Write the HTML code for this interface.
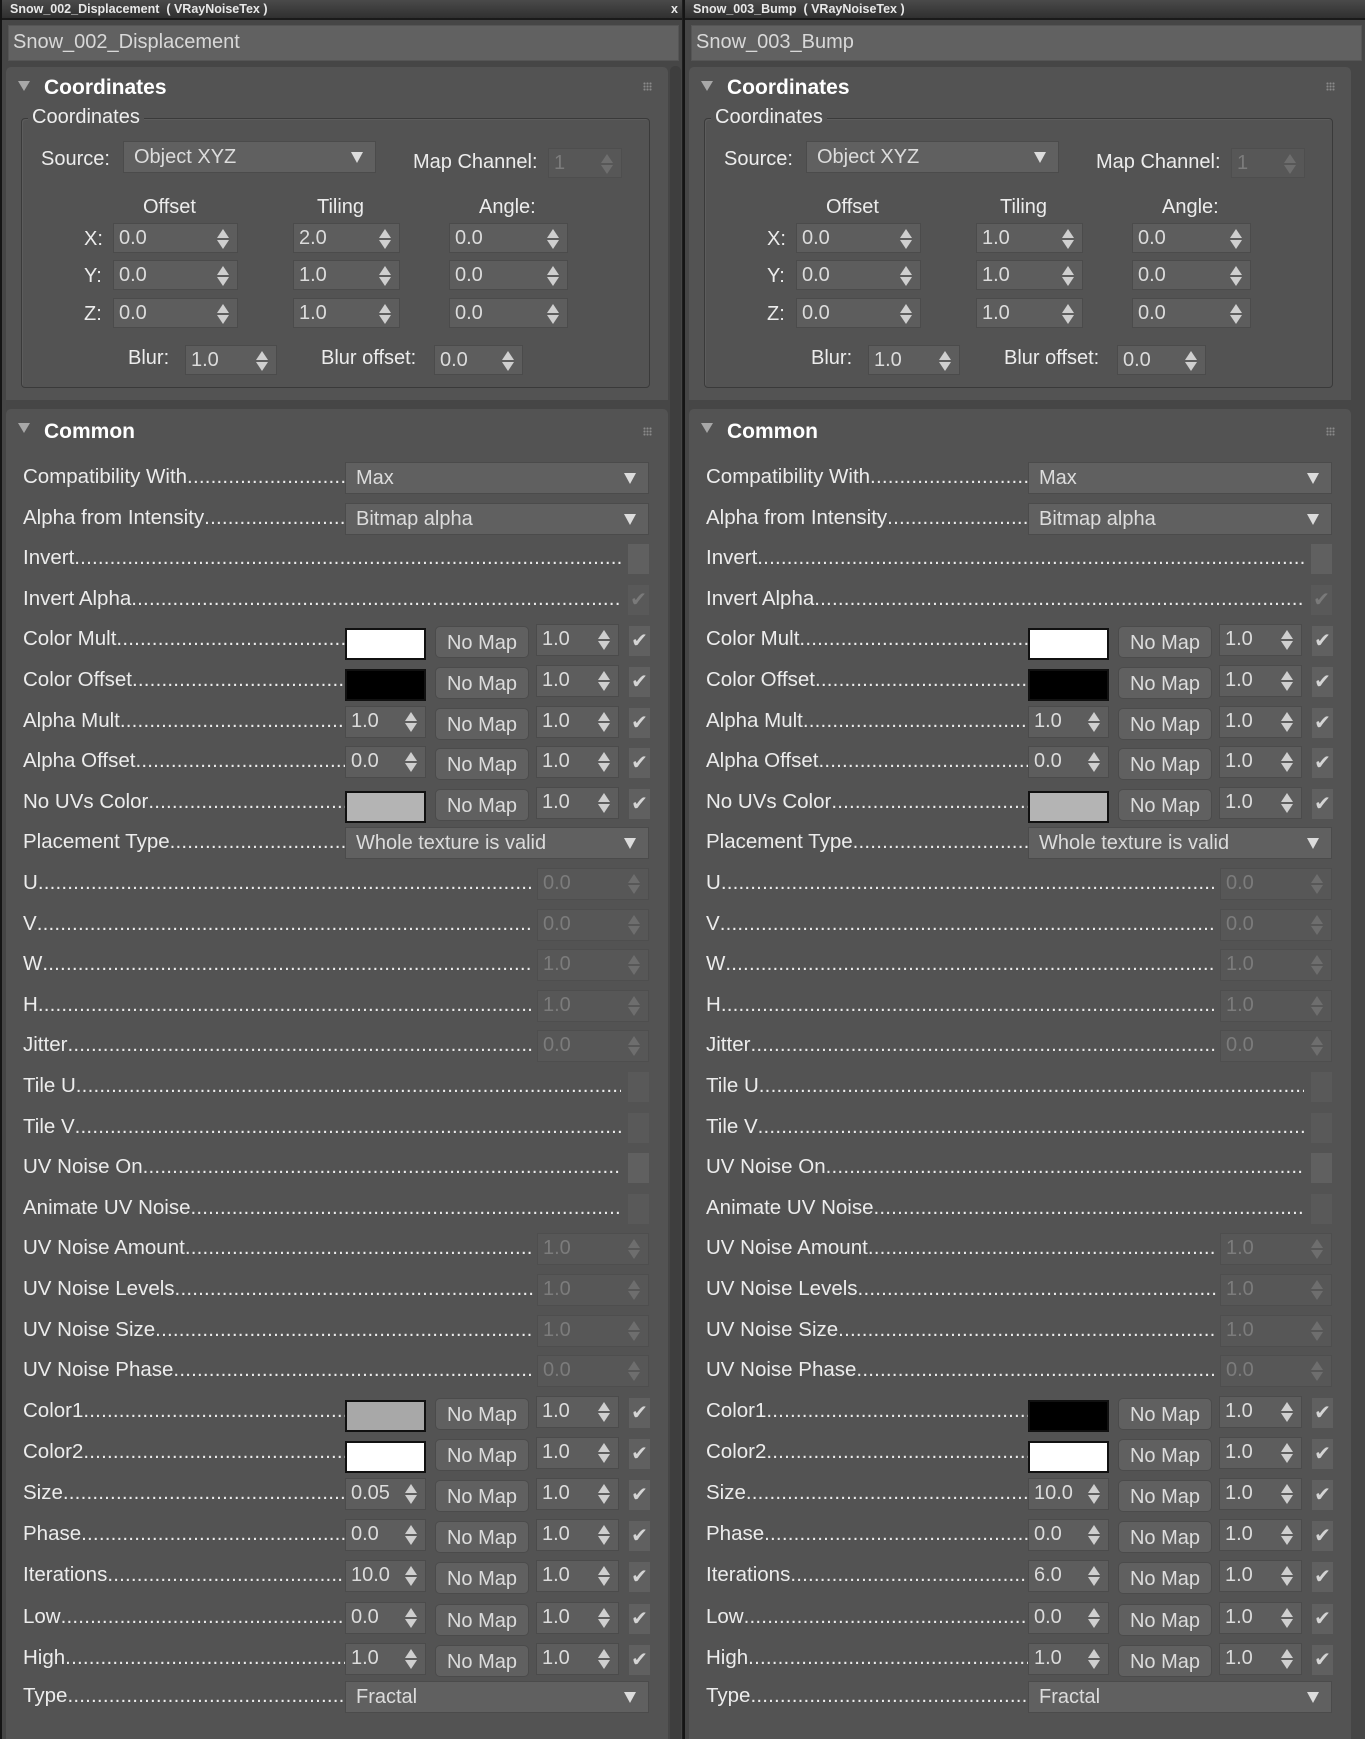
<!DOCTYPE html>
<html><head><meta charset="utf-8"><style>
*{box-sizing:border-box;margin:0;padding:0}
body{width:1365px;height:1739px;background:#1e1e1e;position:relative;overflow:hidden;font-family:"Liberation Sans",sans-serif;color:#e6e6e6}
.pn{position:absolute;top:0;width:682px;height:1739px;background:#464646;overflow:hidden;border-left:2px solid #151515}
.tb{position:absolute;left:0;top:0;width:100%;height:20px;background:linear-gradient(#4a4a4a,#303030);border-bottom:2px solid #1a1a1a;font-size:12.5px;font-weight:bold;color:#e8e8e8;padding:2px 0 0 8px;white-space:nowrap}
.tb b{position:absolute;right:4px;top:2px}
.nf{position:absolute;left:6px;top:25px;width:671px;height:36px;background:#616161;border:1px solid #555;font-size:20px;color:#d8d8d8;padding:5px 0 0 4px}
.ro{position:absolute;left:4px;width:662px;background:#535353;border-radius:5px 5px 0 0}
.strip{position:absolute;left:668px;top:66px;width:11px;height:1680px;background:#3e3e3e;border-radius:5px}
.a{position:absolute;white-space:nowrap}
.hd{font-size:21px;font-weight:bold;color:#fff}
.tri{position:absolute;width:0;height:0;border-left:6px solid transparent;border-right:6px solid transparent;border-top:10px solid #a8a8a8}
.grip{position:absolute;width:9px;height:9px;background:radial-gradient(circle,#8a8a8a 0.9px,transparent 1.2px) 0 0/3px 3px}
.gb{position:absolute;left:15px;top:118px;width:629px;height:270px;border:1px solid #3a3a3a;box-shadow:inset 1px 1px 0 #5c5c5c;border-radius:4px}
.lg{position:absolute;background:#535353;padding:0 4px;font-size:20px;color:#eee}
.lb{font-size:20px;color:#ececec}
.ld{position:absolute;left:21px;height:32px;overflow:hidden;white-space:nowrap;font-size:20.5px;line-height:30px;color:#ececec}
.ld::after{content:"....................................................................................................................................................................................................";letter-spacing:0.2px}
.sp,.dd,.nm,.ck,.sw{position:absolute;height:32px}
.sp{background:#5d5d5d;border:1px solid #4b4b4b;font-size:20px;line-height:28px;color:#dcdcdc;padding-left:5px}
.sp.d{color:#7c7c7c;background:#575757;border-color:#4e4e4e}
.sp i,.dd i{position:absolute;right:8px;top:5px;width:0;height:0;border-left:6px solid transparent;border-right:6px solid transparent;border-bottom:9px solid #cfcfcf}
.sp i::after{content:"";position:absolute;left:-6px;top:11px;border-left:6px solid transparent;border-right:6px solid transparent;border-top:9px solid #cfcfcf}
.sp.d i{border-bottom-color:#6e6e6e}.sp.d i::after{border-top-color:#6e6e6e}
.dd{background:#606060;border:1px solid #4b4b4b;font-size:20px;line-height:30px;color:#dcdcdc;padding-left:10px}
.dd i{border-bottom:0;border-top:11px solid #dcdcdc;top:10px;right:12px}
.nm{background:#606060;border:1px solid #4b4b4b;border-radius:5px;font-size:20px;line-height:32px;color:#dcdcdc;text-align:center}
.ck{width:21px;height:30px;background:#606060;font-size:20px;line-height:30px;color:#d4d4d4;text-align:center}
.ck.d{background:#595959;color:#7a7a7a}
.sw{border:2px solid #111}
</style></head><body>

<!-- LEFT PANEL -->
<div class="pn" style="left:0">
<div class="tb">Snow_002_Displacement &nbsp;( VRayNoiseTex )<b>x</b></div>
<div class="nf">Snow_002_Displacement</div>
<div class="strip"></div>
<div class="ro" style="top:67px;height:333px">
 <div class="tri" style="left:12px;top:14px"></div>
 <div class="a hd" style="left:38px;top:9px">Coordinates</div>
 <div class="grip" style="left:637px;top:15px"></div>
</div>
<div class="ro" style="top:409px;height:1340px">
 <div class="tri" style="left:12px;top:14px"></div>
 <div class="a hd" style="left:38px;top:11px">Common</div>
 <div class="grip" style="left:637px;top:18px"></div>
</div>
<div class="gb" style="left:19px"></div>
<div class="lg" style="left:26px;top:106px">Coordinates</div>
<div class="a lb" style="left:39px;top:148px">Source:</div>
<div class="dd" style="left:121px;top:141px;width:253px">Object XYZ<i></i></div>
<div class="a lb" style="left:411px;top:151px">Map Channel:</div>
<div class="sp d" style="left:546px;top:148px;width:74px;height:30px">1<i></i></div>
<div class="a lb" style="left:141px;top:196px">Offset</div>
<div class="a lb" style="left:315px;top:196px">Tiling</div>
<div class="a lb" style="left:477px;top:196px">Angle:</div>
<div class="a lb" style="left:82px;top:228px">X:</div><div class="a lb" style="left:82px;top:265px">Y:</div><div class="a lb" style="left:82px;top:303px">Z:</div>
<div class="sp" style="left:111px;top:223px;width:125px;height:30px">0.0<i></i></div>
<div class="sp" style="left:291px;top:223px;width:107px;height:30px">2.0<i></i></div>
<div class="sp" style="left:447px;top:223px;width:119px;height:30px">0.0<i></i></div>
<div class="sp" style="left:111px;top:260px;width:125px;height:30px">0.0<i></i></div>
<div class="sp" style="left:291px;top:260px;width:107px;height:30px">1.0<i></i></div>
<div class="sp" style="left:447px;top:260px;width:119px;height:30px">0.0<i></i></div>
<div class="sp" style="left:111px;top:298px;width:125px;height:30px">0.0<i></i></div>
<div class="sp" style="left:291px;top:298px;width:107px;height:30px">1.0<i></i></div>
<div class="sp" style="left:447px;top:298px;width:119px;height:30px">0.0<i></i></div>
<div class="a lb" style="left:126px;top:347px">Blur:</div>
<div class="sp" style="left:183px;top:345px;width:92px;height:30px">1.0<i></i></div>
<div class="a lb" style="left:319px;top:347px">Blur offset:</div>
<div class="sp" style="left:432px;top:345px;width:89px;height:30px">0.0<i></i></div>

<div class="ld" style="top:462px;width:322px">Compatibility With</div><div class="dd" style="left:343px;top:462px;width:304px">Max<i></i></div>
<div class="ld" style="top:503px;width:322px">Alpha from Intensity</div><div class="dd" style="left:343px;top:503px;width:304px">Bitmap alpha<i></i></div>
<div class="ld" style="top:543px;width:598px">Invert</div><div class="ck" style="left:626px;top:544px"></div>
<div class="ld" style="top:584px;width:598px">Invert Alpha</div><div class="ck d" style="left:626px;top:585px">✔</div>
<div class="ld" style="top:624px;width:322px">Color Mult</div><div class="sw" style="left:343px;top:628px;width:81px;background:#fff"></div><div class="nm" style="left:433px;top:626px;width:94px">No Map</div><div class="sp" style="left:534px;top:624px;width:83px">1.0<i></i></div><div class="ck" style="left:627px;top:626px">✔</div>
<div class="ld" style="top:665px;width:322px">Color Offset</div><div class="sw" style="left:343px;top:669px;width:81px;background:#000"></div><div class="nm" style="left:433px;top:667px;width:94px">No Map</div><div class="sp" style="left:534px;top:665px;width:83px">1.0<i></i></div><div class="ck" style="left:627px;top:667px">✔</div>
<div class="ld" style="top:706px;width:322px">Alpha Mult</div><div class="sp" style="left:343px;top:706px;width:81px">1.0<i></i></div><div class="nm" style="left:433px;top:708px;width:94px">No Map</div><div class="sp" style="left:534px;top:706px;width:83px">1.0<i></i></div><div class="ck" style="left:627px;top:708px">✔</div>
<div class="ld" style="top:746px;width:322px">Alpha Offset</div><div class="sp" style="left:343px;top:746px;width:81px">0.0<i></i></div><div class="nm" style="left:433px;top:748px;width:94px">No Map</div><div class="sp" style="left:534px;top:746px;width:83px">1.0<i></i></div><div class="ck" style="left:627px;top:748px">✔</div>
<div class="ld" style="top:787px;width:322px">No UVs Color</div><div class="sw" style="left:343px;top:791px;width:81px;background:#b4b4b4"></div><div class="nm" style="left:433px;top:789px;width:94px">No Map</div><div class="sp" style="left:534px;top:787px;width:83px">1.0<i></i></div><div class="ck" style="left:627px;top:789px">✔</div>
<div class="ld" style="top:827px;width:322px">Placement Type</div><div class="dd" style="left:343px;top:827px;width:304px">Whole texture is valid<i></i></div>
<div class="ld" style="top:868px;width:510px">U</div><div class="sp d" style="left:535px;top:868px;width:112px">0.0<i></i></div>
<div class="ld" style="top:909px;width:510px">V</div><div class="sp d" style="left:535px;top:909px;width:112px">0.0<i></i></div>
<div class="ld" style="top:949px;width:510px">W</div><div class="sp d" style="left:535px;top:949px;width:112px">1.0<i></i></div>
<div class="ld" style="top:990px;width:510px">H</div><div class="sp d" style="left:535px;top:990px;width:112px">1.0<i></i></div>
<div class="ld" style="top:1030px;width:510px">Jitter</div><div class="sp d" style="left:535px;top:1030px;width:112px">0.0<i></i></div>
<div class="ld" style="top:1071px;width:598px">Tile U</div><div class="ck d" style="left:626px;top:1072px"></div>
<div class="ld" style="top:1112px;width:598px">Tile V</div><div class="ck d" style="left:626px;top:1113px"></div>
<div class="ld" style="top:1152px;width:598px">UV Noise On</div><div class="ck" style="left:626px;top:1153px"></div>
<div class="ld" style="top:1193px;width:598px">Animate UV Noise</div><div class="ck d" style="left:626px;top:1194px"></div>
<div class="ld" style="top:1233px;width:510px">UV Noise Amount</div><div class="sp d" style="left:535px;top:1233px;width:112px">1.0<i></i></div>
<div class="ld" style="top:1274px;width:510px">UV Noise Levels</div><div class="sp d" style="left:535px;top:1274px;width:112px">1.0<i></i></div>
<div class="ld" style="top:1315px;width:510px">UV Noise Size</div><div class="sp d" style="left:535px;top:1315px;width:112px">1.0<i></i></div>
<div class="ld" style="top:1355px;width:510px">UV Noise Phase</div><div class="sp d" style="left:535px;top:1355px;width:112px">0.0<i></i></div>
<div class="ld" style="top:1396px;width:322px">Color1</div><div class="sw" style="left:343px;top:1400px;width:81px;background:#a8a8a8"></div><div class="nm" style="left:433px;top:1398px;width:94px">No Map</div><div class="sp" style="left:534px;top:1396px;width:83px">1.0<i></i></div><div class="ck" style="left:627px;top:1398px">✔</div>
<div class="ld" style="top:1437px;width:322px">Color2</div><div class="sw" style="left:343px;top:1441px;width:81px;background:#fff"></div><div class="nm" style="left:433px;top:1439px;width:94px">No Map</div><div class="sp" style="left:534px;top:1437px;width:83px">1.0<i></i></div><div class="ck" style="left:627px;top:1439px">✔</div>
<div class="ld" style="top:1478px;width:322px">Size</div><div class="sp" style="left:343px;top:1478px;width:81px">0.05<i></i></div><div class="nm" style="left:433px;top:1480px;width:94px">No Map</div><div class="sp" style="left:534px;top:1478px;width:83px">1.0<i></i></div><div class="ck" style="left:627px;top:1480px">✔</div>
<div class="ld" style="top:1519px;width:322px">Phase</div><div class="sp" style="left:343px;top:1519px;width:81px">0.0<i></i></div><div class="nm" style="left:433px;top:1521px;width:94px">No Map</div><div class="sp" style="left:534px;top:1519px;width:83px">1.0<i></i></div><div class="ck" style="left:627px;top:1521px">✔</div>
<div class="ld" style="top:1560px;width:322px">Iterations</div><div class="sp" style="left:343px;top:1560px;width:81px">10.0<i></i></div><div class="nm" style="left:433px;top:1562px;width:94px">No Map</div><div class="sp" style="left:534px;top:1560px;width:83px">1.0<i></i></div><div class="ck" style="left:627px;top:1562px">✔</div>
<div class="ld" style="top:1602px;width:322px">Low</div><div class="sp" style="left:343px;top:1602px;width:81px">0.0<i></i></div><div class="nm" style="left:433px;top:1604px;width:94px">No Map</div><div class="sp" style="left:534px;top:1602px;width:83px">1.0<i></i></div><div class="ck" style="left:627px;top:1604px">✔</div>
<div class="ld" style="top:1643px;width:322px">High</div><div class="sp" style="left:343px;top:1643px;width:81px">1.0<i></i></div><div class="nm" style="left:433px;top:1645px;width:94px">No Map</div><div class="sp" style="left:534px;top:1643px;width:83px">1.0<i></i></div><div class="ck" style="left:627px;top:1645px">✔</div>
<div class="ld" style="top:1681px;width:322px">Type</div><div class="dd" style="left:343px;top:1681px;width:304px">Fractal<i></i></div>
</div>

<!-- RIGHT PANEL -->
<div class="pn" style="left:683px">
<div class="tb">Snow_003_Bump &nbsp;( VRayNoiseTex )</div>
<div class="nf">Snow_003_Bump</div>
<div class="ro" style="top:67px;height:333px">
 <div class="tri" style="left:12px;top:14px"></div>
 <div class="a hd" style="left:38px;top:9px">Coordinates</div>
 <div class="grip" style="left:637px;top:15px"></div>
</div>
<div class="ro" style="top:409px;height:1340px">
 <div class="tri" style="left:12px;top:14px"></div>
 <div class="a hd" style="left:38px;top:11px">Common</div>
 <div class="grip" style="left:637px;top:18px"></div>
</div>
<div class="gb" style="left:19px"></div>
<div class="lg" style="left:26px;top:106px">Coordinates</div>
<div class="a lb" style="left:39px;top:148px">Source:</div>
<div class="dd" style="left:121px;top:141px;width:253px">Object XYZ<i></i></div>
<div class="a lb" style="left:411px;top:151px">Map Channel:</div>
<div class="sp d" style="left:546px;top:148px;width:74px;height:30px">1<i></i></div>
<div class="a lb" style="left:141px;top:196px">Offset</div>
<div class="a lb" style="left:315px;top:196px">Tiling</div>
<div class="a lb" style="left:477px;top:196px">Angle:</div>
<div class="a lb" style="left:82px;top:228px">X:</div><div class="a lb" style="left:82px;top:265px">Y:</div><div class="a lb" style="left:82px;top:303px">Z:</div>
<div class="sp" style="left:111px;top:223px;width:125px;height:30px">0.0<i></i></div>
<div class="sp" style="left:291px;top:223px;width:107px;height:30px">1.0<i></i></div>
<div class="sp" style="left:447px;top:223px;width:119px;height:30px">0.0<i></i></div>
<div class="sp" style="left:111px;top:260px;width:125px;height:30px">0.0<i></i></div>
<div class="sp" style="left:291px;top:260px;width:107px;height:30px">1.0<i></i></div>
<div class="sp" style="left:447px;top:260px;width:119px;height:30px">0.0<i></i></div>
<div class="sp" style="left:111px;top:298px;width:125px;height:30px">0.0<i></i></div>
<div class="sp" style="left:291px;top:298px;width:107px;height:30px">1.0<i></i></div>
<div class="sp" style="left:447px;top:298px;width:119px;height:30px">0.0<i></i></div>
<div class="a lb" style="left:126px;top:347px">Blur:</div>
<div class="sp" style="left:183px;top:345px;width:92px;height:30px">1.0<i></i></div>
<div class="a lb" style="left:319px;top:347px">Blur offset:</div>
<div class="sp" style="left:432px;top:345px;width:89px;height:30px">0.0<i></i></div>

<div class="ld" style="top:462px;width:322px">Compatibility With</div><div class="dd" style="left:343px;top:462px;width:304px">Max<i></i></div>
<div class="ld" style="top:503px;width:322px">Alpha from Intensity</div><div class="dd" style="left:343px;top:503px;width:304px">Bitmap alpha<i></i></div>
<div class="ld" style="top:543px;width:598px">Invert</div><div class="ck" style="left:626px;top:544px"></div>
<div class="ld" style="top:584px;width:598px">Invert Alpha</div><div class="ck d" style="left:626px;top:585px">✔</div>
<div class="ld" style="top:624px;width:322px">Color Mult</div><div class="sw" style="left:343px;top:628px;width:81px;background:#fff"></div><div class="nm" style="left:433px;top:626px;width:94px">No Map</div><div class="sp" style="left:534px;top:624px;width:83px">1.0<i></i></div><div class="ck" style="left:627px;top:626px">✔</div>
<div class="ld" style="top:665px;width:322px">Color Offset</div><div class="sw" style="left:343px;top:669px;width:81px;background:#000"></div><div class="nm" style="left:433px;top:667px;width:94px">No Map</div><div class="sp" style="left:534px;top:665px;width:83px">1.0<i></i></div><div class="ck" style="left:627px;top:667px">✔</div>
<div class="ld" style="top:706px;width:322px">Alpha Mult</div><div class="sp" style="left:343px;top:706px;width:81px">1.0<i></i></div><div class="nm" style="left:433px;top:708px;width:94px">No Map</div><div class="sp" style="left:534px;top:706px;width:83px">1.0<i></i></div><div class="ck" style="left:627px;top:708px">✔</div>
<div class="ld" style="top:746px;width:322px">Alpha Offset</div><div class="sp" style="left:343px;top:746px;width:81px">0.0<i></i></div><div class="nm" style="left:433px;top:748px;width:94px">No Map</div><div class="sp" style="left:534px;top:746px;width:83px">1.0<i></i></div><div class="ck" style="left:627px;top:748px">✔</div>
<div class="ld" style="top:787px;width:322px">No UVs Color</div><div class="sw" style="left:343px;top:791px;width:81px;background:#b4b4b4"></div><div class="nm" style="left:433px;top:789px;width:94px">No Map</div><div class="sp" style="left:534px;top:787px;width:83px">1.0<i></i></div><div class="ck" style="left:627px;top:789px">✔</div>
<div class="ld" style="top:827px;width:322px">Placement Type</div><div class="dd" style="left:343px;top:827px;width:304px">Whole texture is valid<i></i></div>
<div class="ld" style="top:868px;width:510px">U</div><div class="sp d" style="left:535px;top:868px;width:112px">0.0<i></i></div>
<div class="ld" style="top:909px;width:510px">V</div><div class="sp d" style="left:535px;top:909px;width:112px">0.0<i></i></div>
<div class="ld" style="top:949px;width:510px">W</div><div class="sp d" style="left:535px;top:949px;width:112px">1.0<i></i></div>
<div class="ld" style="top:990px;width:510px">H</div><div class="sp d" style="left:535px;top:990px;width:112px">1.0<i></i></div>
<div class="ld" style="top:1030px;width:510px">Jitter</div><div class="sp d" style="left:535px;top:1030px;width:112px">0.0<i></i></div>
<div class="ld" style="top:1071px;width:598px">Tile U</div><div class="ck d" style="left:626px;top:1072px"></div>
<div class="ld" style="top:1112px;width:598px">Tile V</div><div class="ck d" style="left:626px;top:1113px"></div>
<div class="ld" style="top:1152px;width:598px">UV Noise On</div><div class="ck" style="left:626px;top:1153px"></div>
<div class="ld" style="top:1193px;width:598px">Animate UV Noise</div><div class="ck d" style="left:626px;top:1194px"></div>
<div class="ld" style="top:1233px;width:510px">UV Noise Amount</div><div class="sp d" style="left:535px;top:1233px;width:112px">1.0<i></i></div>
<div class="ld" style="top:1274px;width:510px">UV Noise Levels</div><div class="sp d" style="left:535px;top:1274px;width:112px">1.0<i></i></div>
<div class="ld" style="top:1315px;width:510px">UV Noise Size</div><div class="sp d" style="left:535px;top:1315px;width:112px">1.0<i></i></div>
<div class="ld" style="top:1355px;width:510px">UV Noise Phase</div><div class="sp d" style="left:535px;top:1355px;width:112px">0.0<i></i></div>
<div class="ld" style="top:1396px;width:322px">Color1</div><div class="sw" style="left:343px;top:1400px;width:81px;background:#000"></div><div class="nm" style="left:433px;top:1398px;width:94px">No Map</div><div class="sp" style="left:534px;top:1396px;width:83px">1.0<i></i></div><div class="ck" style="left:627px;top:1398px">✔</div>
<div class="ld" style="top:1437px;width:322px">Color2</div><div class="sw" style="left:343px;top:1441px;width:81px;background:#fff"></div><div class="nm" style="left:433px;top:1439px;width:94px">No Map</div><div class="sp" style="left:534px;top:1437px;width:83px">1.0<i></i></div><div class="ck" style="left:627px;top:1439px">✔</div>
<div class="ld" style="top:1478px;width:322px">Size</div><div class="sp" style="left:343px;top:1478px;width:81px">10.0<i></i></div><div class="nm" style="left:433px;top:1480px;width:94px">No Map</div><div class="sp" style="left:534px;top:1478px;width:83px">1.0<i></i></div><div class="ck" style="left:627px;top:1480px">✔</div>
<div class="ld" style="top:1519px;width:322px">Phase</div><div class="sp" style="left:343px;top:1519px;width:81px">0.0<i></i></div><div class="nm" style="left:433px;top:1521px;width:94px">No Map</div><div class="sp" style="left:534px;top:1519px;width:83px">1.0<i></i></div><div class="ck" style="left:627px;top:1521px">✔</div>
<div class="ld" style="top:1560px;width:322px">Iterations</div><div class="sp" style="left:343px;top:1560px;width:81px">6.0<i></i></div><div class="nm" style="left:433px;top:1562px;width:94px">No Map</div><div class="sp" style="left:534px;top:1560px;width:83px">1.0<i></i></div><div class="ck" style="left:627px;top:1562px">✔</div>
<div class="ld" style="top:1602px;width:322px">Low</div><div class="sp" style="left:343px;top:1602px;width:81px">0.0<i></i></div><div class="nm" style="left:433px;top:1604px;width:94px">No Map</div><div class="sp" style="left:534px;top:1602px;width:83px">1.0<i></i></div><div class="ck" style="left:627px;top:1604px">✔</div>
<div class="ld" style="top:1643px;width:322px">High</div><div class="sp" style="left:343px;top:1643px;width:81px">1.0<i></i></div><div class="nm" style="left:433px;top:1645px;width:94px">No Map</div><div class="sp" style="left:534px;top:1643px;width:83px">1.0<i></i></div><div class="ck" style="left:627px;top:1645px">✔</div>
<div class="ld" style="top:1681px;width:322px">Type</div><div class="dd" style="left:343px;top:1681px;width:304px">Fractal<i></i></div>
</div>
</body></html>
